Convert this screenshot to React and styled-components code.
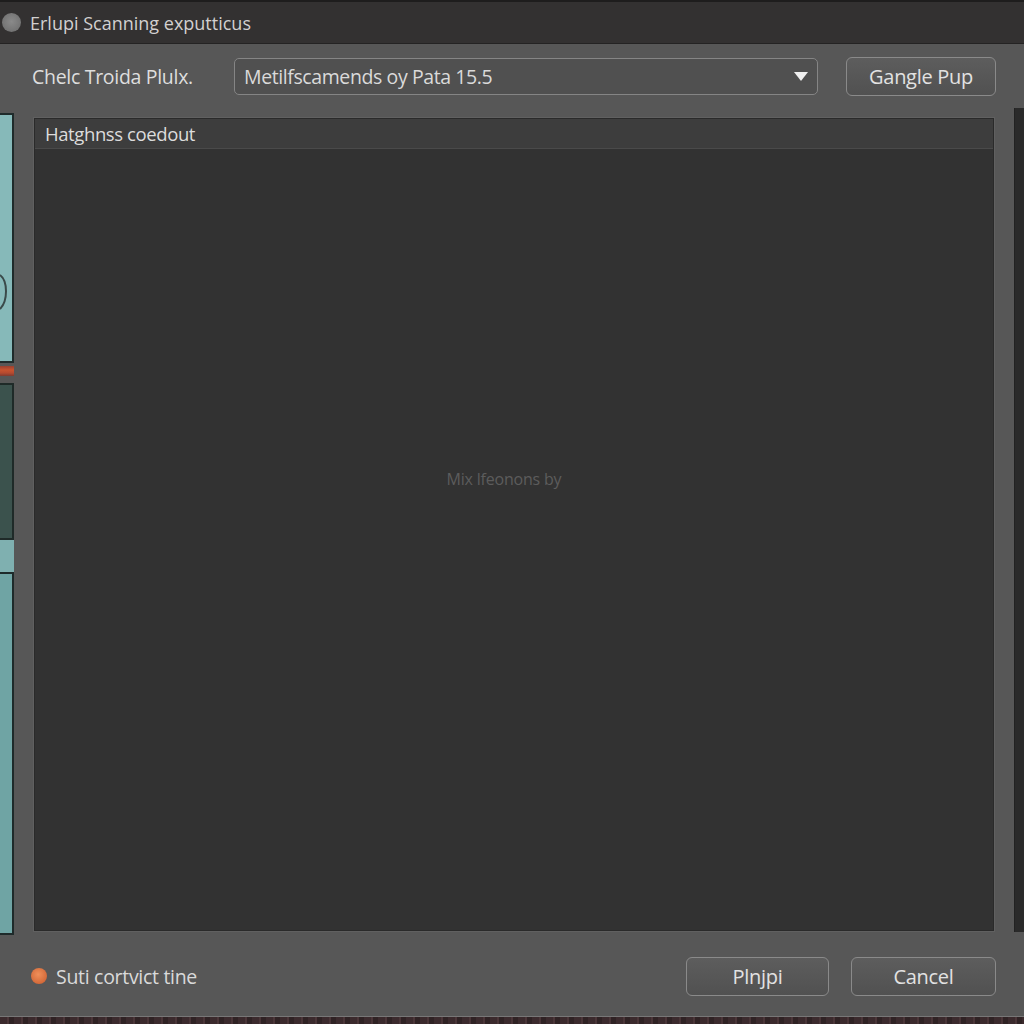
import React from "react";
import styled, { createGlobalStyle } from "styled-components";

const Global = createGlobalStyle`
  html, body { margin: 0; padding: 0; background: #3a2a2c; }
  body { font-family: "Open Sans", "Liberation Sans", sans-serif; }
  * { box-sizing: border-box; }
`;

const Window = styled.div`
  width: 1024px;
  height: 1024px;
  display: flex;
  flex-direction: column;
  background: #575757;
  overflow: hidden;
`;

const TitleBar = styled.div`
  height: 44px;
  flex: none;
  display: flex;
  align-items: center;
  gap: 9px;
  padding-left: 2px;
  background: #333131;
  border-top: 2px solid #1e1d1d;
  border-bottom: 1px solid #242323;
  color: #d2d0d0;
  font-size: 18px;
`;

const TitleIcon = styled.div`
  width: 19px;
  height: 19px;
  border-radius: 50%;
  background: radial-gradient(circle at 50% 45%, #8a8a8a, #6a6a6a);
`;

const Toolbar = styled.div`
  height: 64px;
  flex: none;
  display: flex;
  align-items: center;
  padding: 1px 28px 0 32px;
`;

const Label = styled.div`
  width: 202px;
  color: #dedede;
  font-size: 19.5px;
  letter-spacing: -0.3px;
`;

const Select = styled.div`
  width: 584px;
  height: 37px;
  display: flex;
  align-items: center;
  justify-content: space-between;
  padding: 0 9px 0 9px;
  background: #505050;
  border: 1px solid #858585;
  border-radius: 5px;
  color: #dadada;
  font-size: 19.5px;
  letter-spacing: -0.4px;
`;

const Caret = styled.div`
  width: 0;
  height: 0;
  border-left: 7px solid transparent;
  border-right: 7px solid transparent;
  border-top: 9px solid #f0f0f0;
`;

const Button = styled.div`
  width: ${(p) => p.$w}px;
  height: 39px;
  display: flex;
  align-items: center;
  justify-content: center;
  background: linear-gradient(#5d5d5d, #515151);
  border: 1px solid #8a8a8a;
  border-radius: 6px;
  color: #e2e2e2;
  font-size: 20px;
  letter-spacing: -0.3px;
`;

const Spacer = styled.div`
  flex: 1;
`;

const Content = styled.div`
  flex: 1;
  min-height: 0;
  display: flex;
  align-items: stretch;
  gap: 20px;
`;

const LeftStrip = styled.div`
  width: 14px;
  flex: none;
  display: flex;
  flex-direction: column;
  padding-top: 5px;
`;

const StripPanel = styled.div`
  height: ${(p) => p.$h}px;
  flex: none;
  background: ${(p) => p.$bg};
  border: 2px solid ${(p) => p.$bd};
  border-left: none;
`;

const RedLine = styled.div`
  height: 10px;
  flex: none;
  margin: 3px 0 7px;
  background: linear-gradient(#9a4030, #c8532f 40%, #b54a30 70%, #7e3b30);
`;

const Curve = styled.svg`
  display: block;
`;

const MainPanel = styled.div`
  flex: 1;
  margin-top: 10px;
  margin-bottom: 1px;
  display: flex;
  flex-direction: column;
  background: #323232;
  border: 1px solid #2a2a2a;
  box-shadow: 0 0 0 1px #606060;
`;

const PanelHeader = styled.div`
  height: 30px;
  flex: none;
  display: flex;
  align-items: center;
  padding-left: 10px;
  background: #3d3d3d;
  border-bottom: 1px solid #4a4a4a;
  color: #dcdcdc;
  font-size: 18.5px;
  letter-spacing: -0.4px;
`;

const PanelBody = styled.div`
  flex: 1;
  display: flex;
  align-items: center;
  justify-content: center;
  padding: 0 20px 122px 0;
  color: #5c5c5c;
  font-size: 16px;
  letter-spacing: -0.2px;
`;

const RightStrip = styled.div`
  width: 10px;
  flex: none;
  background: #2a2a2a;
  border-left: 1px solid #222;
`;

const Footer = styled.div`
  height: 84px;
  flex: none;
  display: flex;
  align-items: center;
  gap: 22px;
  padding: 4px 28px 0 31px;
`;

const Status = styled.div`
  flex: 1;
  display: flex;
  align-items: center;
  gap: 9px;
  color: #dadada;
  font-size: 19.5px;
  letter-spacing: -0.3px;
`;

const Dot = styled.div`
  width: 16px;
  height: 16px;
  border-radius: 50%;
  background: radial-gradient(circle at 45% 40%, #f0905a, #c85a2c);
`;

const BottomEdge = styled.div`
  height: 8px;
  flex: none;
  border-top: 1px solid #777;
  background: repeating-linear-gradient(90deg, #3b2a2d 0 7px, #4a3538 7px 9px, #2f2224 9px 14px);
`;

export default function App() {
  return (
    <>
      <Global />
      <Window>
        <TitleBar>
          <TitleIcon />
          <span>Erlupi Scanning exputticus</span>
        </TitleBar>
        <Toolbar>
          <Label>Chelc Troida Plulx.</Label>
          <Select>
            <span>Metilfscamends oy Pata 15.5</span>
            <Caret />
          </Select>
          <Spacer />
          <Button $w={150}>Gangle Pup</Button>
        </Toolbar>
        <Content>
          <LeftStrip>
            <StripPanel $h={250} $bg="#86b9b9" $bd="#1f2b2b">
              <Curve width="12" height="246" viewBox="0 0 12 246">
                <path d="M0 160 C8 166 8 186 0 194" fill="none" stroke="#3a4a4a" strokeWidth="2" />
              </Curve>
            </StripPanel>
            <RedLine />
            <StripPanel $h={157} $bg="#3b524d" $bd="#1f2a28" />
            <StripPanel $h={32} $bg="#7fb0b0" $bd="#7fb0b0" />
            <StripPanel $h={363} $bg="#6fa4a4" $bd="#1e2a2a" />
          </LeftStrip>
          <MainPanel>
            <PanelHeader>Hatghnss coedout</PanelHeader>
            <PanelBody>Mix lfeonons by</PanelBody>
          </MainPanel>
          <RightStrip />
        </Content>
        <Footer>
          <Status>
            <Dot />
            <span>Suti cortvict tine</span>
          </Status>
          <Button $w={143}>Plnjpi</Button>
          <Button $w={145}>Cancel</Button>
        </Footer>
        <BottomEdge />
      </Window>
    </>
  );
}
